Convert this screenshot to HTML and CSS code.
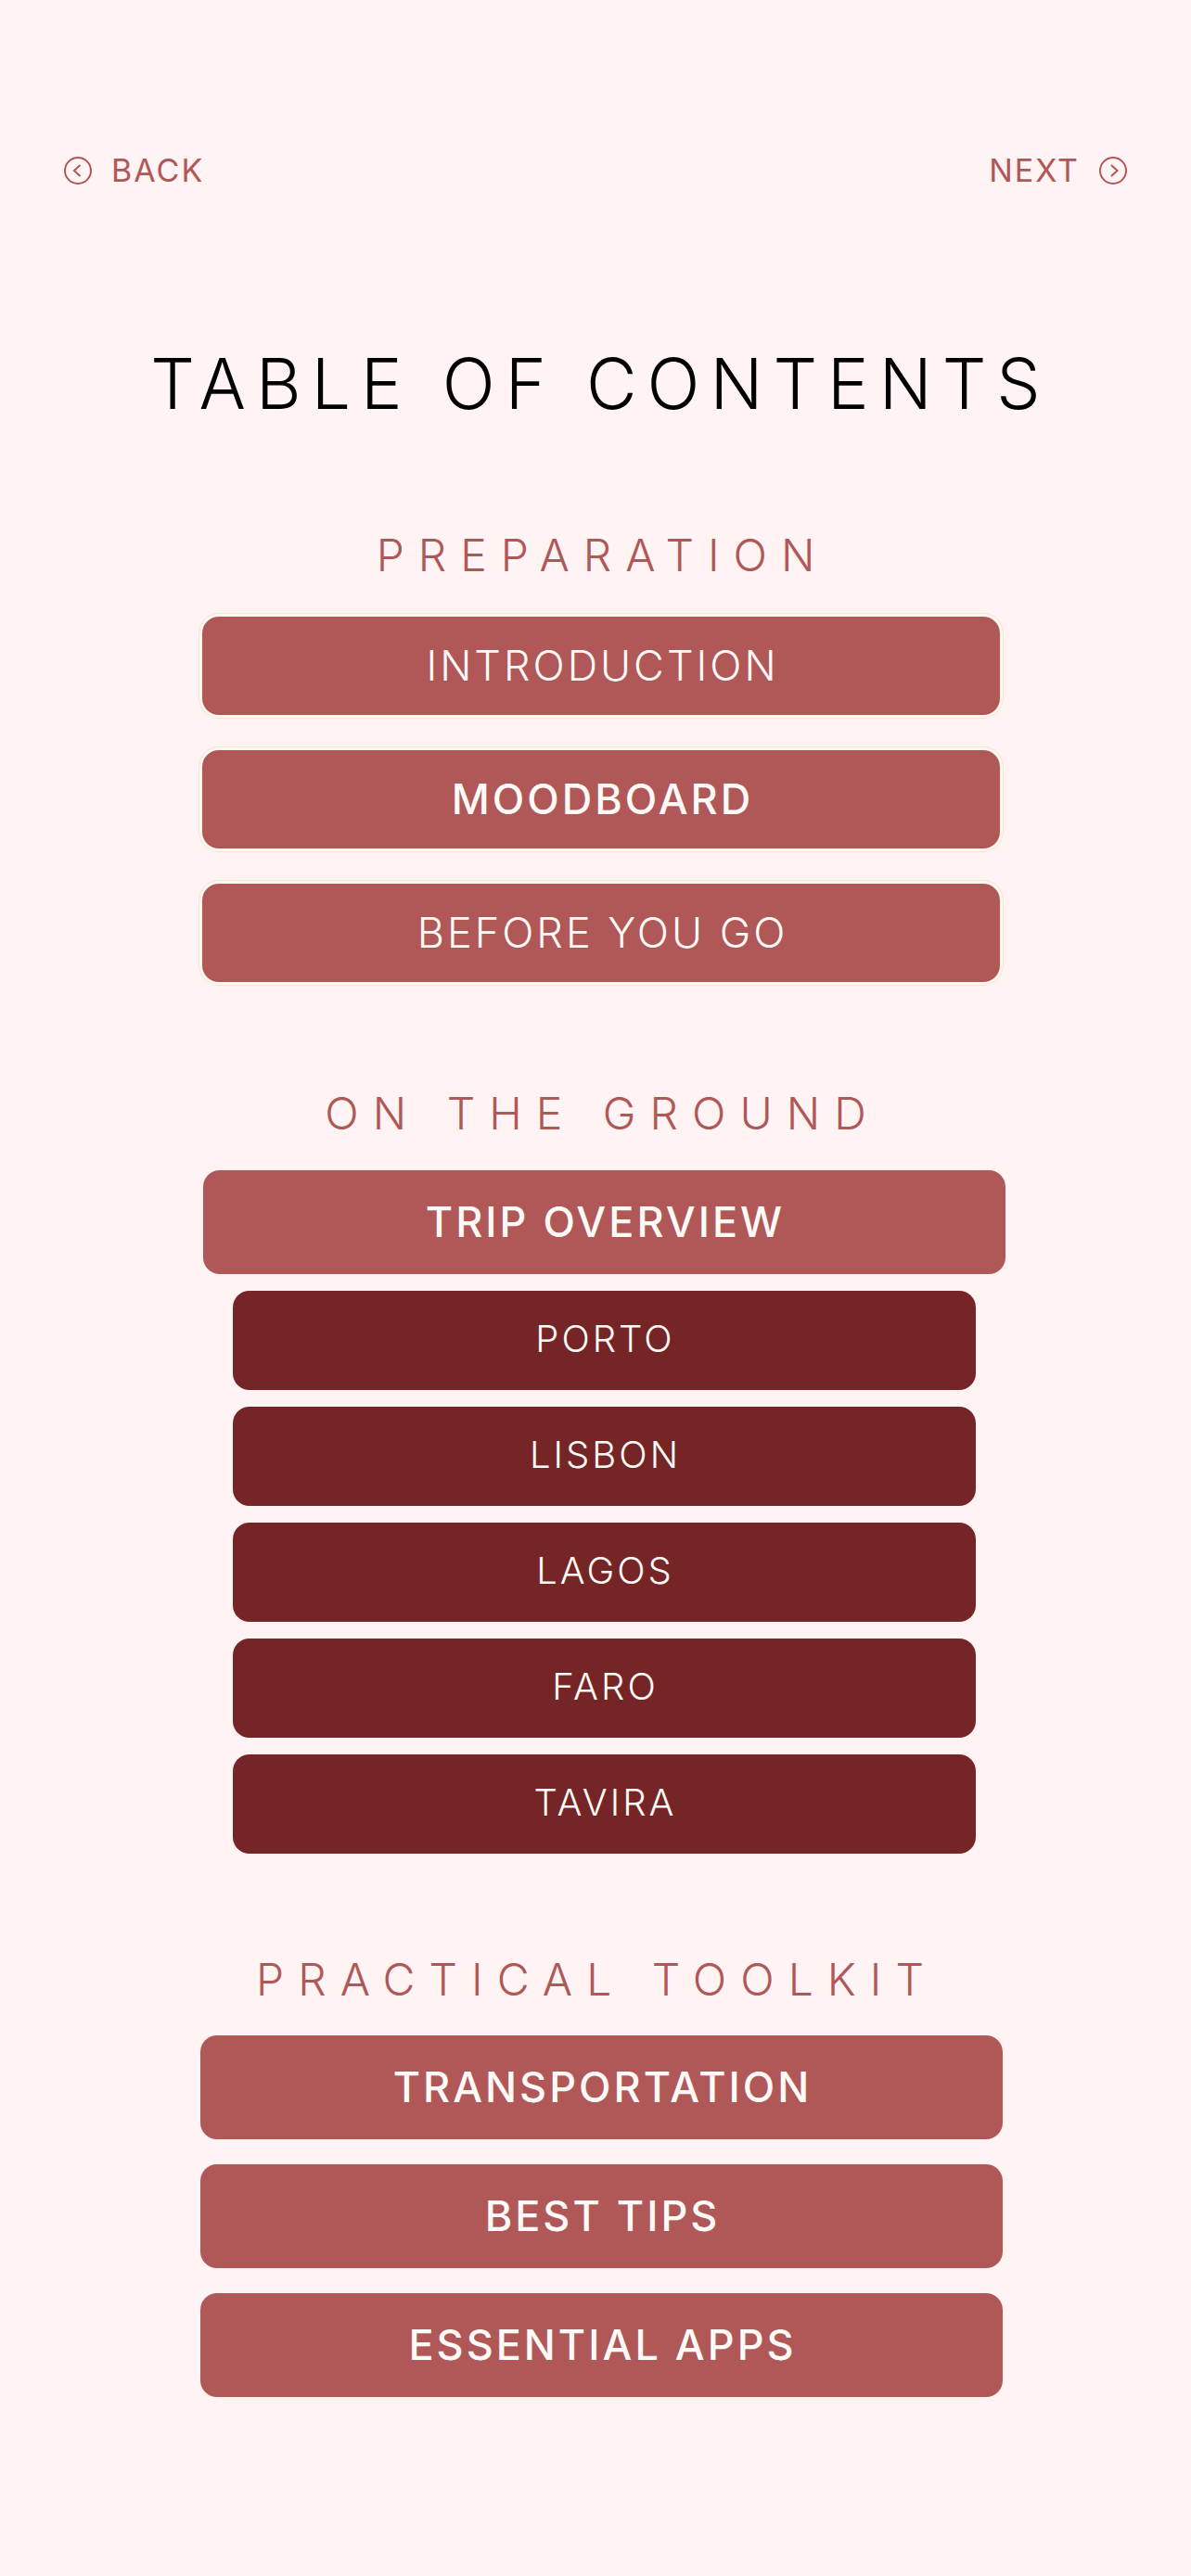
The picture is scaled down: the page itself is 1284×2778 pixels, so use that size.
FILE: index.html
```
<!DOCTYPE html>
<html lang="en">
  <head>
    <meta charset="UTF-8" />
    <meta name="viewport" content="width=device-width, initial-scale=1.0" />
    <title>Table of Contents</title>
    <link rel="stylesheet" href="styles.css">
  </head>
  <body>
    <!-- back / next -->
    <nav class="pager">
      <a href="#back">
        <svg class="icon" viewBox="0 0 32 32">
          <circle cx="16" cy="16" r="14" />
          <path d="M18.500 10 L12 16 L18.500 22" />
        </svg>
        BACK
      </a>
      <a href="#next">
        NEXT
        <svg class="icon" viewBox="0 0 32 32">
          <circle cx="16" cy="16" r="14" />
          <path d="M14 10 L20.500 16 L14 22" />
        </svg>
      </a>
    </nav>

    <main class="contents">
      <h1>TABLE OF CONTENTS</h1>

      <section class="preparation">
        <h2>PREPARATION</h2>
        <ul class="links">
          <li><a class="light" href="#introduction">INTRODUCTION</a></li>
          <li><a href="#moodboard">MOODBOARD</a></li>
          <li><a class="light" href="#before-you-go">BEFORE YOU GO</a></li>
        </ul>
      </section>

      <section class="ground">
        <h2>ON THE GROUND</h2>
        <ul class="links">
          <li><a href="#overview">TRIP OVERVIEW</a></li>
          <li><a class="city" href="#porto">PORTO</a></li>
          <li><a class="city" href="#lisbon">LISBON</a></li>
          <li><a class="city" href="#lagos">LAGOS</a></li>
          <li><a class="city" href="#faro">FARO</a></li>
          <li><a class="city" href="#tavira">TAVIRA</a></li>
        </ul>
      </section>

      <section class="toolkit">
        <h2>PRACTICAL TOOLKIT</h2>
        <ul class="links">
          <li><a href="#transportation">TRANSPORTATION</a></li>
          <li><a href="#best-tips">BEST TIPS</a></li>
          <li><a href="#essential-apps">ESSENTIAL APPS</a></li>
        </ul>
      </section>
    </main>
  </body>
</html>
```
FILE: styles.css
```
* {
  margin: 0;
  padding: 0;
  box-sizing: border-box;
}
body {
  background-color: #fff3f3;
  font-family: Inter, "Liberation Sans", sans-serif;
  padding: 164px 0 192px;
}
a {
  text-decoration: none;
}
/* back / next */
.pager {
  display: flex;
  justify-content: space-between;
  padding: 0 68px;
}
.pager a {
  display: flex;
  align-items: center;
  gap: 20px;
  color: #b05757;
  font-size: 34px;
  font-weight: 400;
  letter-spacing: 2px;
  line-height: 40px;
}
.icon {
  width: 32px;
  height: 32px;
  fill: none;
  stroke: currentColor;
  stroke-width: 2;
}
/* headings, the indent balances the spacing after the last letter */
h1 {
  margin-top: 165px;
  color: #000;
  font-size: 75px;
  font-weight: 300;
  letter-spacing: 11px;
  text-indent: 11px;
  line-height: 90px;
  text-align: center;
}
h2 {
  color: #b05757;
  font-size: 48px;
  font-weight: 350;
  letter-spacing: 15px;
  text-indent: 15px;
  line-height: 60px;
  text-align: center;
}
section {
  display: flex;
  flex-direction: column;
  align-items: center;
}
/* buttons */
.links {
  display: flex;
  flex-direction: column;
  width: 100%;
  max-width: 865px;
  list-style: none;
}
.links a {
  display: block;
  border-radius: 18px;
  background-color: #b05757;
  color: #fffaf7;
  font-size: 45px;
  font-weight: 500;
  letter-spacing: 3px;
  text-indent: 3px;
  line-height: 112px;
  text-align: center;
}
.links .light {
  font-weight: 350;
}
/* preparation */
.preparation {
  margin-top: 110px;
  padding-left: 12px;
}
.preparation h2 {
  margin-right: 12px;
}
.preparation .links {
  gap: 38px;
  max-width: 860px;
  margin-top: 36px;
}
.preparation .links a {
  line-height: 106px;
  box-shadow: 0 0 0 3px #fff6ee, 0 0 0 4px #f3e4dc;
}
/* on the ground */
.ground {
  margin-top: 112px;
  padding-left: 18px;
}
.ground h2 {
  margin-right: 18px;
}
.ground .links {
  gap: 18px;
  margin-top: 31px;
}
.ground .links .city {
  margin: 0 32px;
  padding-bottom: 3px;
  background-color: #752525;
  font-size: 40px;
  font-weight: 350;
  line-height: 104px;
}
/* practical toolkit */
.toolkit {
  margin-top: 106px;
  padding-left: 12px;
}
.toolkit h2 {
  margin-right: 24px;
}
.toolkit .links {
  gap: 27px;
  margin-top: 30px;
}
```
